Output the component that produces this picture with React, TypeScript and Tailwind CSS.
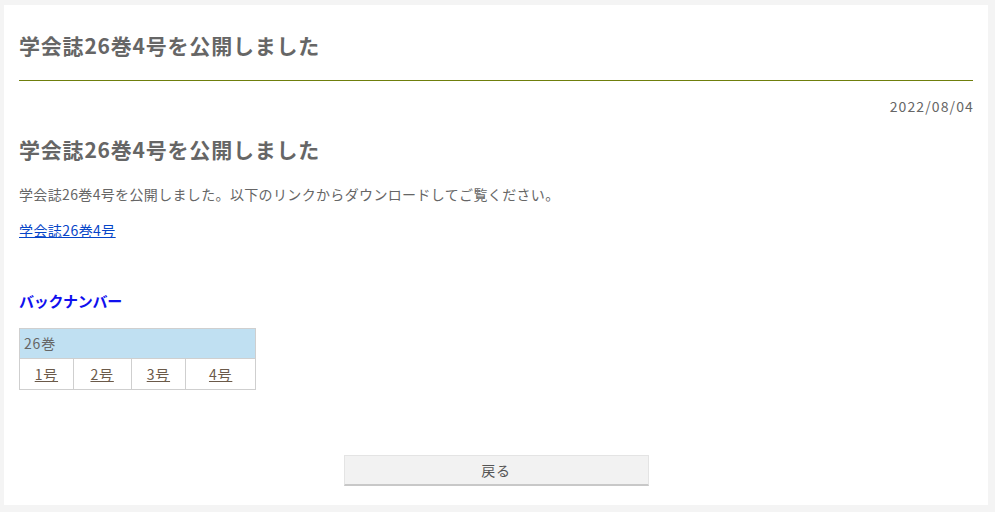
export default function App() {
  const issues = ['1号', '2号', '3号', '4号'];
  const widths = ['w-[54px]', 'w-[58px]', 'w-[55px]', 'w-[70px]'];

  return (
    <div
      className="w-[995px] h-[512px] bg-[#f4f4f4] pt-[5px] pl-[4px] pr-[7px] pb-[7px] text-[#666] tracking-[0.05em]"
      style={{ fontFamily: '"Noto Sans CJK JP", "Noto Sans", sans-serif' }}
    >
      <div className="h-[500px] bg-white px-[15px] flex flex-col">
        {/* Page title */}
        <h1 className="text-[21px] font-bold leading-[28px] pt-[26px] pb-[21px] border-b border-b-[#6f7f0c]">
          学会誌26巻4号を公開しました
        </h1>

        <div className="text-right text-[14px] leading-[20px] mt-[15px] tracking-[0.08em] -mr-[1px]">2022/08/04</div>

        {/* Article */}
        <h2 className="text-[21px] font-bold leading-[28px] mt-[19px]">学会誌26巻4号を公開しました</h2>
        <p className="text-[14px] leading-[20px] mt-[21px] tracking-[0.025em]">
          学会誌26巻4号を公開しました。以下のリンクからダウンロードしてご覧ください。
        </p>
        <p className="text-[14px] leading-[20px] mt-[16px] tracking-[0.03em]">
          <a href="#" className="text-[#0645c8] underline">学会誌26巻4号</a>
        </p>

        {/* Back numbers */}
        <h3 className="text-[15px] font-bold leading-[20px] text-[#1010ee] mt-[51px] tracking-[-0.02em]">バックナンバー</h3>
        <table className="mt-[17px] border-collapse text-[14px] w-[237px]">
          <thead>
            <tr>
              <th
                colSpan={4}
                className="bg-[#c0e0f2] border border-[#cfcfcf] text-left font-normal h-[30px] px-[4px]"
              >
                26巻
              </th>
            </tr>
          </thead>
          <tbody>
            <tr>
              {issues.map((it, i) => (
                <td key={it} className={`${widths[i]} border border-[#cfcfcf] h-[31px] text-center`}>
                  <a href="#" className="underline text-[#6b5a4a]">{it}</a>
                </td>
              ))}
            </tr>
          </tbody>
        </table>

        <div className="flex justify-center mt-[65px]">
          <button className="w-[305px] h-[31px] bg-[#f2f2f2] text-[14px] text-[#555] border border-[#e4e4e4] border-b-2 border-b-[#c8c8c8]">
            戻る
          </button>
        </div>
      </div>
    </div>
  );
}
